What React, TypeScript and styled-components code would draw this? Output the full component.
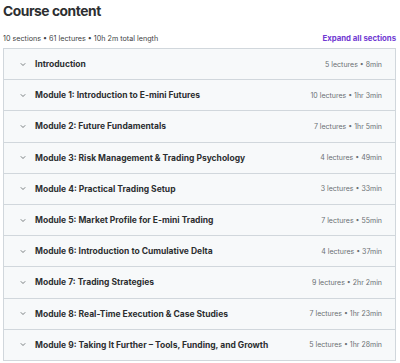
import React from 'react';
import styled, { createGlobalStyle } from 'styled-components';

interface Section {
    title: string,
    lectures: number,
    length: string,
}

const sections: Section[] = [
    { title: 'Introduction', lectures: 5, length: '8min' },
    { title: 'Module 1: Introduction to E-mini Futures', lectures: 10, length: '1hr 3min' },
    { title: 'Module 2: Future Fundamentals', lectures: 7, length: '1hr 5min' },
    { title: 'Module 3: Risk Management & Trading Psychology', lectures: 4, length: '49min' },
    { title: 'Module 4: Practical Trading Setup', lectures: 3, length: '33min' },
    { title: 'Module 5: Market Profile for E-mini Trading', lectures: 7, length: '55min' },
    { title: 'Module 6: Introduction to Cumulative Delta', lectures: 4, length: '37min' },
    { title: 'Module 7: Trading Strategies', lectures: 9, length: '2hr 2min' },
    { title: 'Module 8: Real-Time Execution & Case Studies', lectures: 7, length: '1hr 23min' },
    { title: 'Module 9: Taking It Further – Tools, Funding, and Growth', lectures: 5, length: '1hr 28min' },
];

const Chevron = () => (
    <svg width="6" height="5" viewBox="0 0 6 5" fill="none">
        <path d="M0.8 1.3L3 3.5L5.2 1.3" stroke="#6a6f73" strokeWidth="0.9" />
    </svg>
);

const App = () => {
    return (
        <>
            <GlobalStyle />
            <Wrap>
                <Title>Course content</Title>
                <MetaRow>
                    <span>10 sections • 61 lectures • 10h 2m total length</span>
                    <ExpandBtn>Expand all sections</ExpandBtn>
                </MetaRow>
                <Accordion>
                    {sections.map((s) => (
                        <SectionRow key={s.title}>
                            <Chevron />
                            <SectionTitle>{s.title}</SectionTitle>
                            <SectionInfo>{s.lectures} lectures • {s.length}</SectionInfo>
                        </SectionRow>
                    ))}
                </Accordion>
            </Wrap>
        </>
    );
};

export default App;

const GlobalStyle = createGlobalStyle`
  body {
    margin: 0;
    background: #fff;
    font-family: Inter, "Noto Sans", sans-serif;
    color: #2d2f31;
  }
`;

const Wrap = styled.div`
  width: 393px;
  padding: 0 0 0 3px;
`;

const Title = styled.h2`
  margin: 0;
  padding-top: 1px;
  font-size: 13.8px;
  font-weight: 700;
  line-height: 20px;
  letter-spacing: -0.45px;
`;

const MetaRow = styled.div`
  display: flex;
  justify-content: space-between;
  align-items: center;
  margin-top: 9px;
  height: 16px;
  font-size: 7.2px;
  color: #3e4143;
`;

const ExpandBtn = styled.button`
  background: none;
  border: none;
  padding: 0;
  font-family: inherit;
  font-size: 7.8px;
  font-weight: 700;
  color: #7039d2;
  cursor: pointer;
`;

const Accordion = styled.div`
  margin-top: 2px;
  border: 1px solid #d1d7dc;
`;

const SectionRow = styled.div`
  display: flex;
  align-items: center;
  height: 30.2px;
  padding: 0 13px 0 16px;
  background: #f7f9fa;
  border-bottom: 1px solid #d1d7dc;
  &:last-child {
    border-bottom: none;
  }
`;

const SectionTitle = styled.div`
  flex: 1;
  margin-left: 9px;
  font-size: 8.5px;
  font-weight: 700;
  color: #2d2f31;
  white-space: nowrap;
`;

const SectionInfo = styled.div`
  font-size: 7px;
  color: #6a6f73;
  white-space: nowrap;
`;
